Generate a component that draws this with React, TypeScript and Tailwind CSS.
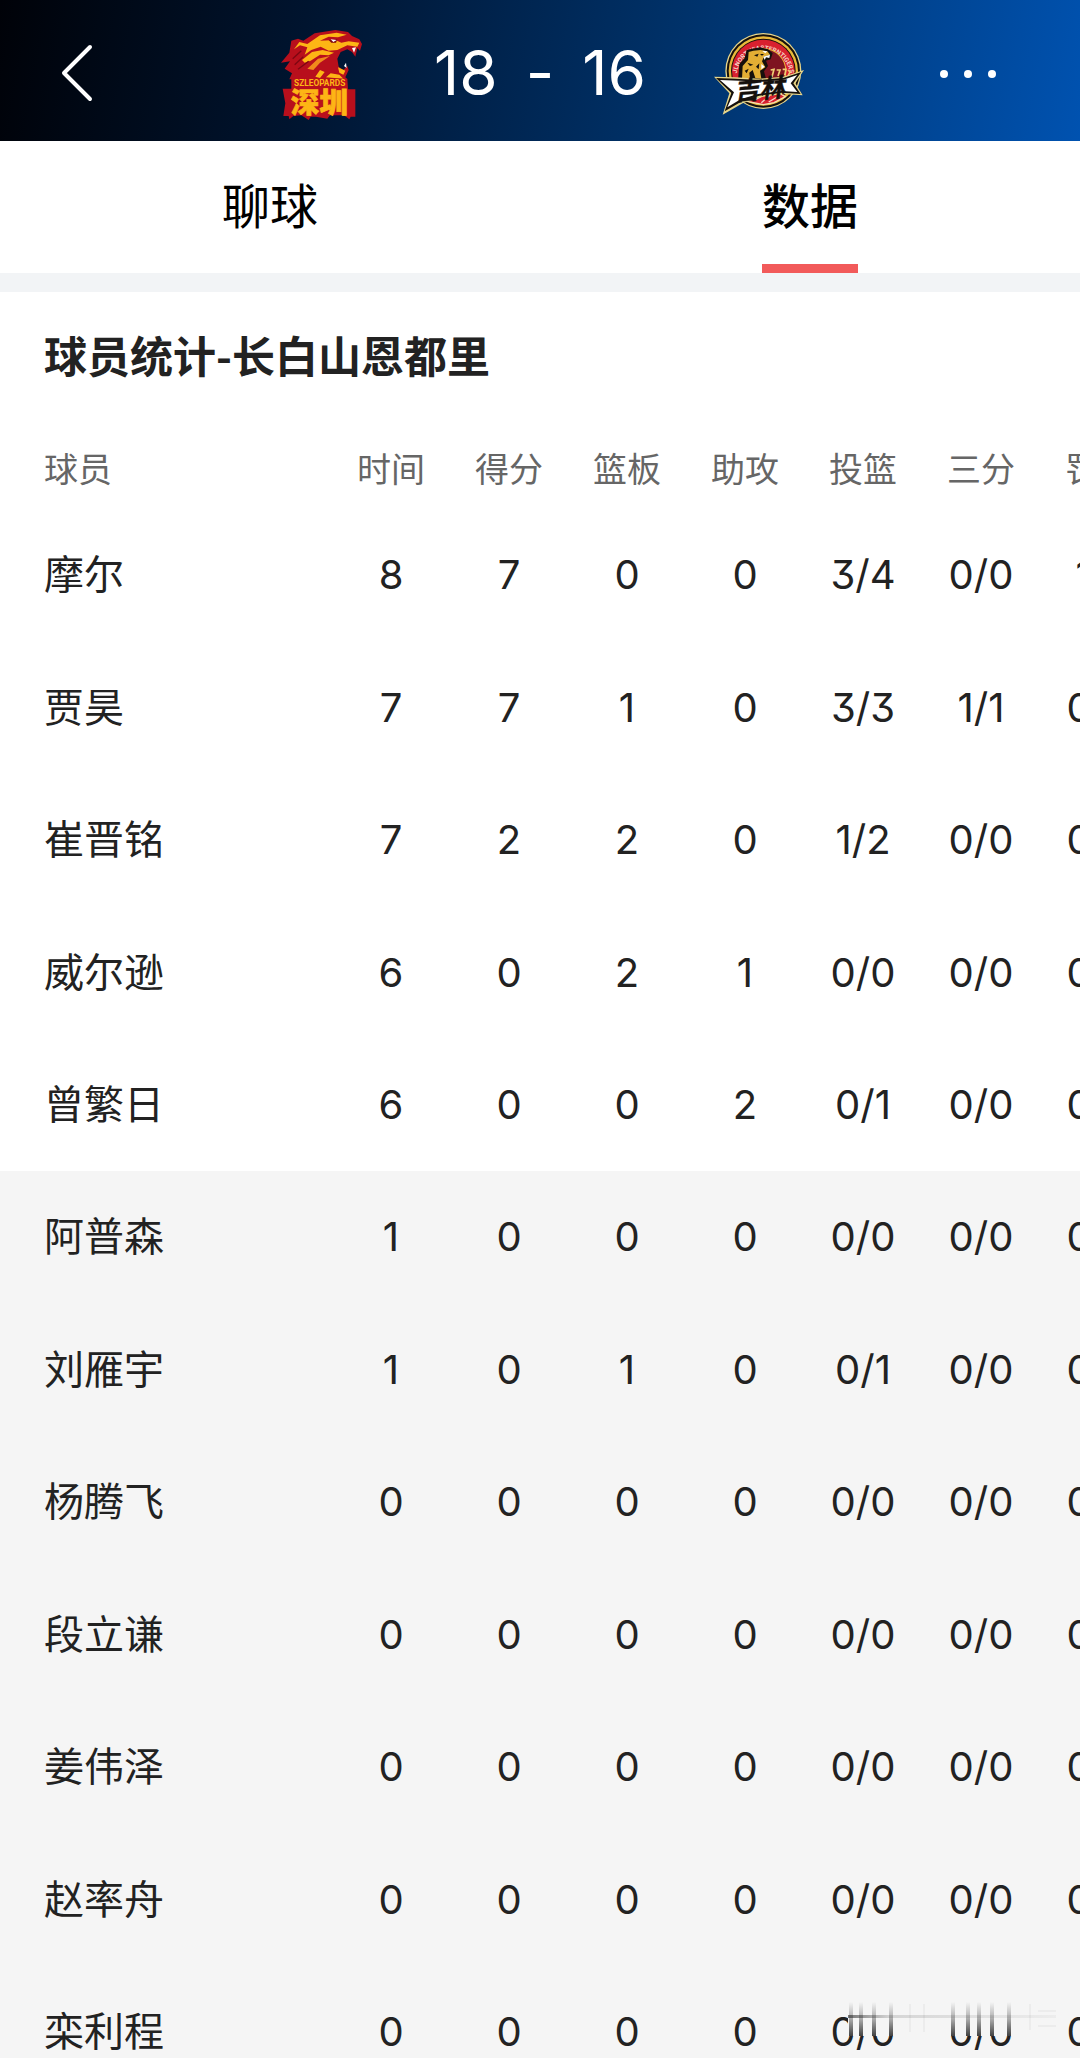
import { useState } from "react";

type Player = {
    name: string;
    stats: string[];
};

const columns = ["时间", "得分", "篮板", "助攻", "投篮", "三分", "罚篮"];

const starters: Player[] = [
    { name: "摩尔", stats: ["8", "7", "0", "0", "3/4", "0/0", "1/1"] },
    { name: "贾昊", stats: ["7", "7", "1", "0", "3/3", "1/1", "0/0"] },
    { name: "崔晋铭", stats: ["7", "2", "2", "0", "1/2", "0/0", "0/0"] },
    { name: "威尔逊", stats: ["6", "0", "2", "1", "0/0", "0/0", "0/0"] },
    { name: "曾繁日", stats: ["6", "0", "0", "2", "0/1", "0/0", "0/0"] },
];

const bench: Player[] = [
    { name: "阿普森", stats: ["1", "0", "0", "0", "0/0", "0/0", "0/0"] },
    { name: "刘雁宇", stats: ["1", "0", "1", "0", "0/1", "0/0", "0/0"] },
    { name: "杨腾飞", stats: ["0", "0", "0", "0", "0/0", "0/0", "0/0"] },
    { name: "段立谦", stats: ["0", "0", "0", "0", "0/0", "0/0", "0/0"] },
    { name: "姜伟泽", stats: ["0", "0", "0", "0", "0/0", "0/0", "0/0"] },
    { name: "赵率舟", stats: ["0", "0", "0", "0", "0/0", "0/0", "0/0"] },
    { name: "栾利程", stats: ["0", "0", "0", "0", "0/0", "0/0", "0/0"] },
];

function ShenzhenLogo() {
    return (
        <svg viewBox="0 -6 300 330" className="w-[100px] h-[110px]" role="img" aria-label="深圳">
            {/* head */}
            <path fill="#b80f1c" d="M33 128 L58 98 L64 62 L84 56 L100 62 L134 40 L196 30 L234 36 L246 48 L268 58 L276 72 L270 92 L262 84 L256 110 L246 96 L232 88 L212 96 L202 116 L206 140 L220 150 L232 138 L236 150 L226 172 L232 178 L58 178 L66 160 L44 146 L60 124 Z" />
            <path fill="#fdb515" d="M72 88 L88 66 L112 72 L150 46 L200 38 L230 44 L204 52 L176 50 L150 62 L196 60 L214 68 L236 64 L268 68 L262 80 L232 76 L202 90 L176 92 L152 80 L124 90 L104 104 L112 82 L90 76 Z" />
            <path fill="#fdb515" d="M96 120 L126 96 L158 90 L192 98 L176 106 L150 104 L122 122 L104 128 Z" />
            <path fill="#f08a1c" d="M112 146 L144 116 L180 108 L150 128 L130 150 Z" />
            <path fill="#fdb515" d="M136 170 L150 150 L164 156 L150 174 Z M168 172 L182 160 L208 164 L220 176 Z M204 142 L226 152 L220 164 L208 158 Z" />
            <path fill="#7d0712" d="M176 60 L202 58 L198 68 L184 68 Z" />
            <path fill="#fff" d="M182 58 L200 60 L190 66 Z M246 84 L258 82 L252 98 Z M222 138 L228 128 L230 144 Z" />
            <path stroke="#7d0712" strokeWidth="4" fill="none" d="M68 116 L94 92 M74 134 L100 110 M84 148 L116 124" />
            {/* nameplate */}
            <path fill="#b80f1c" d="M64 176 L232 176 L234 208 L256 208 L256 290 L242 290 L238 298 L222 286 L180 286 L172 296 L138 290 L122 290 L116 300 L94 286 L70 288 L58 298 L56 288 L40 288 L46 250 L38 206 L64 206 Z" />
            <text x="149" y="197" textAnchor="middle" fill="#fdb515" className="font-['Roboto',sans-serif] font-bold text-[25px]">
                SZLEOPARDS
            </text>
            <text x="148" y="280" textAnchor="middle" fill="#fdb515" stroke="#fdb515" strokeWidth="2" className="font-['Noto_Sans_CJK_SC',sans-serif] font-black text-[86px]">
                深圳
            </text>
        </svg>
    );
}

function JilinLogo() {
    return (
        <svg viewBox="30 -4 300 330" className="w-[100px] h-[110px]" role="img" aria-label="吉林">
            <circle cx="190" cy="155" r="114" fill="#e8d68a" />
            <circle cx="190" cy="155" r="110" fill="#15100c" />
            <circle cx="190" cy="155" r="104" fill="#e9b93a" />
            <circle cx="190" cy="155" r="97" fill="#15100c" />
            <circle cx="190" cy="155" r="94" fill="#d8202f" />
            <path id="jilin-ring" d="M110 172 A 80 80 0 1 1 270 172" fill="none" />
            <text fill="#f6d3c6" className="font-['Roboto',sans-serif] font-bold text-[19px]">
                <textPath href="#jilin-ring" startOffset="50%" textAnchor="middle">
                    JLNORTHEASTERNTIGERS
                </textPath>
            </text>
            <circle cx="190" cy="155" r="69" fill="#e9b93a" />
            <circle cx="190" cy="155" r="66" fill="#7e1420" />
            {/* tiger */}
            <path fill="#15100c" d="M114 186 L118 134 L134 116 L140 92 L156 88 L180 84 L204 90 L218 102 L212 120 L198 124 L204 140 L192 156 L200 186 Z" />
            <path fill="#e3ae34" d="M126 178 L128 140 L144 122 L146 98 L160 94 L182 92 L202 96 L210 106 L192 112 L186 126 L196 144 L180 154 L184 178 L166 176 L158 152 L148 160 L150 178 Z" />
            <path fill="#15100c" d="M162 108 L176 103 L172 112 Z M142 130 L160 136 L150 140 Z M180 104 L192 104 L186 109 Z M134 154 L146 148 L140 162 Z M168 142 L178 132 L176 150 Z" />
            <path fill="#fff" d="M186 94 L202 96 L196 102 Z M190 112 L210 106 L208 116 L198 114 L194 122 Z M184 134 L194 142 L184 150 Z" />
            <path stroke="#f0cf74" strokeWidth="5" fill="none" d="M212 152 L222 150 L216 172 M230 152 L240 152 L234 170 M248 150 L258 150 L254 168 M264 152 L270 158 L264 170" />
            {/* lower medallion */}
            <path fill="#d8202f" stroke="#f3e3b0" strokeWidth="4" d="M142 246 L176 222 L240 222 L256 232 L222 250 L190 256 Z" />
            <path stroke="#f6d3c6" strokeWidth="4" fill="none" d="M160 244 L188 230 M184 250 L210 228 M206 248 L236 230" />
            {/* star banner */}
            <path fill="#e8d68a" d="M42 172 L106 174 L180 178 L250 172 L312 152 L286 192 L308 228 L246 224 L180 234 L128 252 L68 286 L88 222 Z" />
            <path fill="#15100c" d="M48 176 L106 178 L180 182 L250 176 L304 158 L280 192 L302 224 L246 220 L178 229 L126 246 L74 276 L94 221 Z" />
            <path fill="#fff" d="M60 182 L118 184 L190 187 L250 181 L292 167 L272 192 L292 218 L244 215 L174 224 L122 240 L82 264 L102 219 Z" />
            <text x="102" y="236" transform="rotate(-5 190 210)" fill="#15100c" stroke="#15100c" strokeWidth="1" className="font-['Noto_Sans_CJK_SC',sans-serif] font-bold italic text-[76px]">
                吉林
            </text>
        </svg>
    );
}

// Faded stamp that covers the last row in the corner of the screen
function CornerStamp() {
    const streaks = [3, 13, 26, 43, 105, 120, 131, 144, 161];

    return (
        <svg viewBox="0 0 208 36" className="absolute right-6 bottom-[22px] w-52 h-9 pointer-events-none" aria-hidden="true">
            <defs>
                <linearGradient id="streak" x1="0" y1="0" x2="0" y2="1">
                    <stop offset="0" stopColor="#222" stopOpacity="0" />
                    <stop offset="0.5" stopColor="#222" stopOpacity="0.35" />
                    <stop offset="1" stopColor="#222" stopOpacity="0.85" />
                </linearGradient>
                <linearGradient id="trail" x1="0" y1="0" x2="1" y2="0">
                    <stop offset="0" stopColor="#222" stopOpacity="0.6" />
                    <stop offset="0.2" stopColor="#222" stopOpacity="0.15" />
                    <stop offset="1" stopColor="#222" stopOpacity="0.04" />
                </linearGradient>
            </defs>
            <rect width="208" height="36" fill="#f5f5f5" />
            {streaks.map((x) => (
                <rect key={x} x={x - 2} y="2" width="4" height="34" fill="url(#streak)" />
            ))}
            <rect y="15" width="208" height="3" fill="url(#trail)" />
            <path stroke="#222" strokeOpacity="0.04" strokeWidth="2" d="M62 4 V32 M76 4 V32 M182 4 V30 M190 11 H208 M190 26 H208" />
        </svg>
    );
}

function PlayerRows({ players, className }: { players: Player[]; className: string }) {
    return (
        <tbody className={className}>
            {players.map((player) => (
                <tr key={player.name} className="h-[132px] even:h-[133px]">
                    <th scope="row" className="pl-11 text-left font-normal">
                        {player.name}
                    </th>
                    {player.stats.map((value, i) => (
                        <td key={columns[i]} className="text-center whitespace-nowrap">
                            {value}
                        </td>
                    ))}
                </tr>
            ))}
        </tbody>
    );
}

function App() {
    const [tab, setTab] = useState("数据");

    return (
        <div className="relative h-screen overflow-hidden bg-white text-[#222] font-['Inter','Noto_Sans_CJK_SC',sans-serif]">
            <header className="h-[141px] pt-1 grid grid-cols-[1fr_auto_1fr] items-center text-white bg-[linear-gradient(100deg,#000208,#00142f_28%,#003066_60%,#0052b0)]">
                <button type="button" aria-label="返回" className="justify-self-start pl-[60px]">
                    <svg viewBox="0 0 34 60" fill="none" stroke="currentColor" strokeWidth="4"
                        strokeLinecap="round" strokeLinejoin="round" className="w-[34px] h-[60px]">
                        <path d="M30 4 L4 30 L30 56" />
                    </svg>
                </button>

                <div className="w-[540px] flex items-center justify-between">
                    <ShenzhenLogo />
                    <div className="flex items-center gap-7 text-[62px] leading-[72px] font-normal">
                        <span>18</span>
                        <span>-</span>
                        <span>16</span>
                    </div>
                    <JilinLogo />
                </div>

                <button type="button" aria-label="更多" className="justify-self-end pr-[82px]">
                    <svg viewBox="0 0 60 10" fill="currentColor" className="w-[60px] h-[10px]">
                        <circle cx="6" cy="6" r="4" />
                        <circle cx="30" cy="6" r="4" />
                        <circle cx="54" cy="6" r="4" />
                    </svg>
                </button>
            </header>

            <nav className="flex border-b-[19px] border-[#f2f4f6] text-black">
                {["聊球", "数据"].map((name) => (
                    <button
                        key={name}
                        type="button"
                        onClick={() => setTab(name)}
                        className={`flex-1 flex flex-col items-center text-[48px] ${tab === name ? "font-medium" : "font-normal"}`}
                    >
                        <span className="h-[123px] flex items-center pt-2">{name}</span>
                        <span className={`w-24 h-[9px] ${tab === name ? "bg-[#f25a5a]" : ""}`} />
                    </button>
                ))}
            </nav>

            <main>
                <h1 className="h-[124px] mb-[14px] pl-11 flex items-center text-[43px] font-bold font-['Noto_Sans_CJK_SC',sans-serif]">
                    球员统计-长白山恩都里
                </h1>

                <div className="overflow-hidden">
                    <table className="table-fixed w-[1158px] text-[40px] leading-[48px] [font-feature-settings:'cv09']">
                        <thead>
                            <tr className="h-[79px] text-[34px] text-[#666]">
                                <th scope="col" className="w-[332px] pl-11 text-left font-normal">球员</th>
                                {columns.map((column) => (
                                    <th key={column} scope="col" className="w-[118px] font-normal whitespace-nowrap">
                                        {column}
                                    </th>
                                ))}
                            </tr>
                        </thead>
                        <PlayerRows players={starters} className="bg-white" />
                        <PlayerRows players={bench} className="bg-[#f5f5f5]" />
                    </table>
                </div>
            </main>

            <CornerStamp />
        </div>
    );
}

export default App;
